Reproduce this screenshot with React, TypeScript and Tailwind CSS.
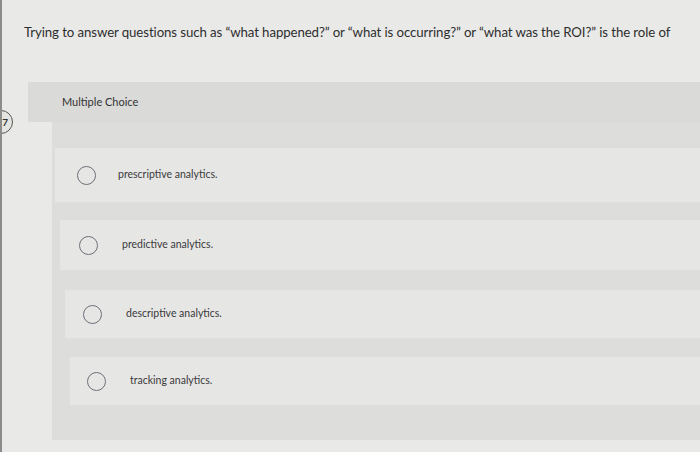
import React from 'react';

const options = [
  { label: 'prescriptive analytics.', rowPad: 'ml-[3px] h-[54px] pl-[22px]', gap: 'gap-[22px]' },
  { label: 'predictive analytics.', rowPad: 'ml-[8px] h-[50px] pl-[19px]', gap: 'gap-[24px]' },
  { label: 'descriptive analytics.', rowPad: 'ml-[13px] h-[48px] pl-[18px]', gap: 'gap-[24px]' },
  { label: 'tracking analytics.', rowPad: 'ml-[18px] h-[48px] pl-[17px]', gap: 'gap-[24px]' },
];

const rowGaps = ['', 'mt-[18px]', 'mt-[20px]', 'mt-[19px]'];

export default function App() {
  return (
    <div
      className="relative w-[700px] h-[452px] overflow-hidden bg-[#e9e9e8] border-l-2 border-[#8c8c8c] text-[#353535]"
      style={{ fontFamily: 'Lato, "Open Sans", sans-serif' }}
    >
      {/* question */}
      <p className="pt-[22px] pl-[22px] text-[13.25px] leading-[20px] tracking-[-0.1px] text-[#2e2e2e]">
        Trying to answer questions such as “what happened?” or “what is occurring?” or “what was the ROI?” is the role of
      </p>

      {/* header band */}
      <div className="mt-[40px] ml-[26px] h-[40px] bg-[#dadad9] flex items-center pl-[34px]">
        <span className="text-[11px] text-[#333]">Multiple Choice</span>
      </div>

      {/* answers panel */}
      <div className="ml-[50px] h-[318px] bg-[#dddddc] pt-[26px]">
        {options.map((o, i) => (
          <div
            key={o.label}
            className={`${rowGaps[i]} ${o.rowPad} bg-[#e6e6e5] flex items-center ${o.gap}`}
          >
            <span className="w-[19px] h-[19px] rounded-full border-[1.5px] border-[#6e6f78] shrink-0" />
            <span className="text-[10.5px] text-[#3a3a3a]">{o.label}</span>
          </div>
        ))}
      </div>

      {/* question number badge */}
      <div className="absolute left-[-13px] top-[110px] w-[24px] h-[24px] rounded-full border-[1.5px] border-[#555] bg-[#e4e4e0] flex items-center justify-end pr-[4px]">
        <span className="text-[10px] font-bold text-[#333]">7</span>
      </div>
    </div>
  );
}
